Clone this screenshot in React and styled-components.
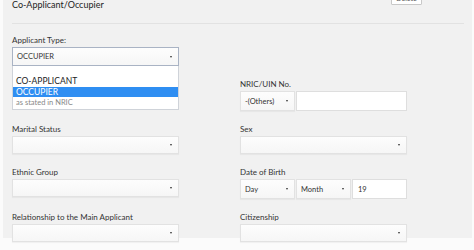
import styled, { createGlobalStyle } from "styled-components";

const GlobalStyle = createGlobalStyle`
  html, body {
    margin: 0;
    padding: 0;
    background: #fbfbfb;
    font-family: Lato, "Open Sans", sans-serif;
    color: #333;
    overflow: hidden;
  }
`;

const Page = styled.div`
  width: 474px;
  height: 250px;
  overflow: hidden;
`;

const Panel = styled.section`
  margin: -10px 2px 0 3px;
  height: 248px;
  padding: 0 8px 0 9px;
  background: #f1f1f1;
  box-sizing: border-box;
`;

const Header = styled.div`
  display: flex;
  justify-content: space-between;
  align-items: flex-start;
  height: 33px;
  border-bottom: 1px solid #e2e2e2;
  padding-right: 42px;
`;

const Title = styled.h2`
  margin: 9px 0 0;
  font-size: 9px;
  font-weight: 400;
  color: #222;
`;

const SmallButton = styled.button`
  margin-top: 1px;
  height: 14px;
  width: 31px;
  padding: 0;
  font-family: inherit;
  font-size: 7px;
  color: #555;
  background: #fff;
  border: 1px solid #c8c8c8;
  border-radius: 1px;
`;

const Field = styled.div`
  display: flex;
  flex-direction: column;
  width: 167px;
  position: relative;
`;

const Label = styled.label`
  font-size: 8px;
  line-height: 12px;
  height: 12px;
  margin-bottom: 1px;
  color: #333;
`;

const Grid = styled.div`
  display: grid;
  grid-template-columns: 167px 167px;
  column-gap: 61px;
  row-gap: 12px;
  margin-top: 12px;
`;

const TopField = styled(Field)`
  margin-top: 10px;
  z-index: 2;
`;

const Select = styled.div`
  display: flex;
  align-items: center;
  justify-content: space-between;
  box-sizing: border-box;
  width: ${(p) => p.$w || "100%"};
  height: ${(p) => p.$h || 18}px;
  padding: 0 6px 0 4px;
  font-size: 7.5px;
  color: #333;
  background: linear-gradient(#fdfdfd, #f6f6f6);
  border: 1px solid ${(p) => (p.$focus ? "#a9b3c4" : "#e2e2e2")};
  box-shadow: ${(p) => (p.$focus ? "none" : "0 1px 1px rgba(0,0,0,0.04)")};
`;

const Caret = styled.span`
  width: 0;
  height: 0;
  border-left: 1.5px solid transparent;
  border-right: 1.5px solid transparent;
  border-top: 2px solid #333;
`;

const Input = styled.div`
  box-sizing: border-box;
  flex: 1;
  height: 20px;
  display: flex;
  align-items: center;
  padding-left: 5px;
  font-size: 7.5px;
  color: #333;
  background: #fff;
  border: 1px solid #dedede;
`;

const Combo = styled.div`
  display: flex;
  gap: 1px;
`;

const Dropdown = styled.ul`
  position: absolute;
  top: 32px;
  left: 0;
  right: 0;
  margin: 0;
  padding: 10px 0 0;
  height: 44px;
  box-sizing: border-box;
  list-style: none;
  background: #fff;
  border: 1px solid #cfd3d9;
  border-top: none;
`;

const Option = styled.li`
  height: 10px;
  line-height: 10px;
  margin-bottom: 1px;
  padding-left: 3px;
  font-size: ${(p) => (p.$hint ? 7.5 : 8.5)}px;
  color: ${(p) => (p.$active ? "#fff" : p.$hint ? "#888" : "#222")};
  background: ${(p) => (p.$active ? "#2f8ef2" : "transparent")};
`;

const Blank = styled.div``;

function SelectBox({ value, h, w, focus }) {
  return (
    <Select $h={h} $w={w} $focus={focus}>
      <span>{value}</span>
      <Caret />
    </Select>
  );
}

export default function App() {
  return (
    <Page>
      <GlobalStyle />
      <Panel>
        <Header>
          <Title>Co-Applicant/Occupier</Title>
          <SmallButton>Delete</SmallButton>
        </Header>

        <TopField>
          <Label>Applicant Type:</Label>
          <SelectBox value="OCCUPIER" h={19} focus />
          <Dropdown>
            <Option>CO-APPLICANT</Option>
            <Option $active>OCCUPIER</Option>
            <Option $hint>as stated in NRIC</Option>
          </Dropdown>
        </TopField>

        <Grid>
          <Blank />
          <Field>
            <Label>NRIC/UIN No.</Label>
            <Combo>
              <SelectBox value="-(Others)" h={20} w="55px" />
              <Input />
            </Combo>
          </Field>

          <Field>
            <Label>Marital Status</Label>
            <SelectBox />
          </Field>
          <Field>
            <Label>Sex</Label>
            <SelectBox />
          </Field>

          <Field>
            <Label>Ethnic Group</Label>
            <SelectBox />
          </Field>
          <Field>
            <Label>Date of Birth</Label>
            <Combo>
              <SelectBox value="Day" h={20} w="55px" />
              <SelectBox value="Month" h={20} w="55px" />
              <Input>19</Input>
            </Combo>
          </Field>

          <Field>
            <Label>Relationship to the Main Applicant</Label>
            <SelectBox />
          </Field>
          <Field>
            <Label>Citizenship</Label>
            <SelectBox />
          </Field>
        </Grid>
      </Panel>
    </Page>
  );
}
